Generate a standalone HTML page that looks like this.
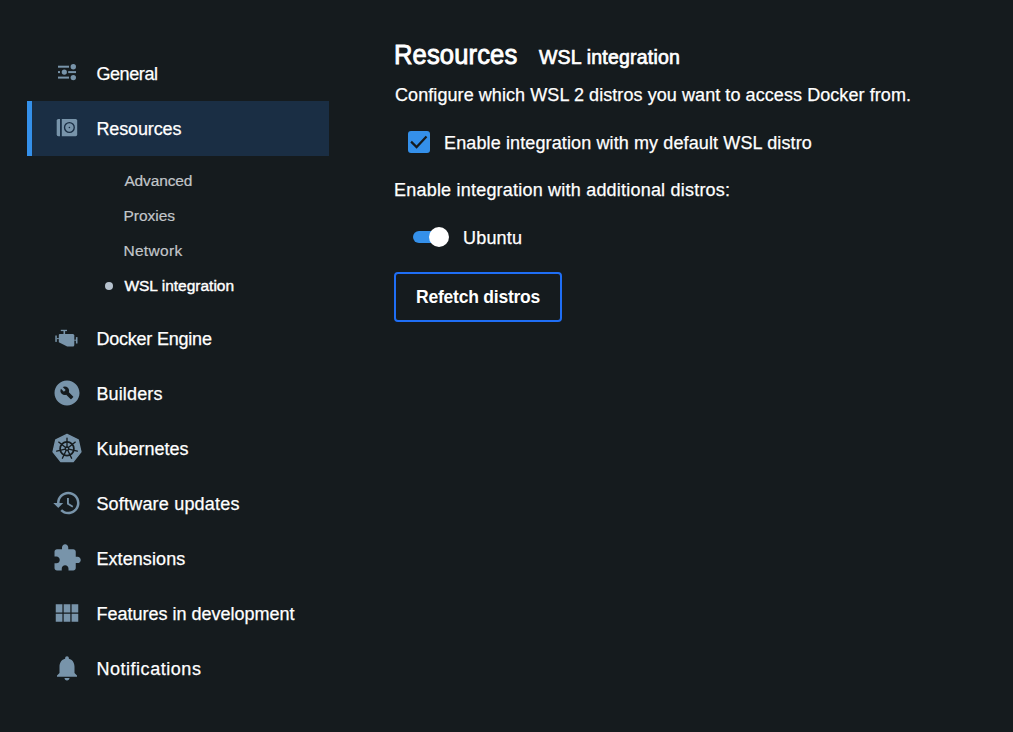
<!DOCTYPE html>
<html><head><meta charset="utf-8">
<style>
html,body{margin:0;padding:0;}
body{width:1013px;height:732px;overflow:hidden;background:#151b1e;font-family:"Liberation Sans",sans-serif;color:#fff;position:relative;}
.t{position:absolute;white-space:nowrap;line-height:1;}
.nav,.body{-webkit-text-stroke:0.25px #fff;}
.nav{font-size:18px;left:96.4px;}
.sub{font-size:15.5px;left:123.4px;color:#c2c6ca;-webkit-text-stroke:0.2px #c2c6ca;}
.ico{position:absolute;left:52px;width:30px;height:30px;}
.ico svg{display:block;width:30px;height:30px;}
.hl{position:absolute;left:27px;top:101px;width:302px;height:55px;background:#1a2e44;}
.bar{position:absolute;left:27px;top:101px;width:5px;height:55px;background:#3490ea;}
.dot{position:absolute;left:105px;top:282px;width:8px;height:8px;border-radius:50%;background:#b6c2ce;}
.body{font-size:18px;}
</style></head><body>
<div class="hl"></div><div class="bar"></div>

<!-- icons -->
<div class="ico" style="top:58px"><svg viewBox="0 0 30 30" fill="#7894aa">
<rect x="6" y="7.7" width="11" height="2"/><circle cx="21.3" cy="8.7" r="2.7"/>
<rect x="6" y="13.1" width="2" height="2"/><circle cx="12.3" cy="14.1" r="2.6"/><rect x="16.2" y="13.1" width="7.8" height="2"/>
<rect x="6" y="18.6" width="11" height="2"/><circle cx="21.3" cy="19.6" r="2.7"/>
</svg></div>
<div class="ico" style="top:113px"><svg viewBox="0 0 30 30">
<rect x="4.7" y="5.9" width="20.5" height="17.3" rx="1.6" fill="#7894aa"/>
<rect x="8" y="5" width="1.8" height="19" fill="#1a2e44"/>
<circle cx="17.4" cy="14.5" r="4.85" fill="none" stroke="#1a2e44" stroke-width="1.35"/>
<circle cx="17.4" cy="14.5" r="0.8" fill="#1a2e44"/>
</svg></div>
<div class="ico" style="top:323px"><svg viewBox="0 0 30 30" fill="#7894aa">
<rect x="8.8" y="6.8" width="6.2" height="1.3"/><rect x="11.5" y="8" width="1.6" height="3"/>
<path d="M6.8 11.9Q6.8 10.9 7.8 10.9H20.8Q22.3 10.9 22.3 12.4V21.9Q22.3 23.4 20.8 23.4H15.2L6.8 19.3Z"/>
<rect x="3.3" y="12.5" width="1.5" height="6.4"/><rect x="4.8" y="15.1" width="2.1" height="1"/>
<rect x="23.9" y="14.1" width="1.6" height="6.4"/><rect x="22.2" y="16.7" width="1.8" height="1"/>
</svg></div>
<div class="ico" style="top:378px"><svg viewBox="0 0 24 24" fill="#7894aa"><path fill-rule="evenodd" d="M12,2C6.48,2,2,6.48,2,12c0,5.52,4.48,10,10,10s10-4.48,10-10C22,6.48,17.52,2,12,2z M16.9,15.49l-1.4,1.4c-0.2,0.2-0.51,0.2-0.71,0l-3.41-3.41c-1.22,0.43-2.64,0.17-3.62-0.81c-1.11-1.11-1.3-2.79-0.59-4.1l2.35,2.35l1.41-1.41L8.58,7.17c1.32-0.71,2.99-0.52,4.1,0.59c0.98,0.98,1.24,2.4,0.81,3.62l3.41,3.41C17.09,14.98,17.09,15.3,16.9,15.49z"/></svg></div>
<div class="ico" style="top:433px"><svg viewBox="0 0 30 30"><polygon points="15.00,1.40 26.18,6.78 28.94,18.88 21.20,28.58 8.80,28.58 1.06,18.88 3.82,6.78" fill="#7894aa" stroke="#7894aa" stroke-width="1.4" stroke-linejoin="round"/><circle cx="15" cy="15.7" r="6.9" fill="none" stroke="#151b1e" stroke-width="1.7"/><line x1="15.00" y1="13.90" x2="15.00" y2="5.10" stroke="#151b1e" stroke-width="1.35" stroke-linecap="round"/><line x1="16.41" y1="14.58" x2="23.29" y2="9.09" stroke="#151b1e" stroke-width="1.35" stroke-linecap="round"/><line x1="16.75" y1="16.10" x2="25.33" y2="18.06" stroke="#151b1e" stroke-width="1.35" stroke-linecap="round"/><line x1="15.78" y1="17.32" x2="19.60" y2="25.25" stroke="#151b1e" stroke-width="1.35" stroke-linecap="round"/><line x1="14.22" y1="17.32" x2="10.40" y2="25.25" stroke="#151b1e" stroke-width="1.35" stroke-linecap="round"/><line x1="13.25" y1="16.10" x2="4.67" y2="18.06" stroke="#151b1e" stroke-width="1.35" stroke-linecap="round"/><line x1="13.59" y1="14.58" x2="6.71" y2="9.09" stroke="#151b1e" stroke-width="1.35" stroke-linecap="round"/><circle cx="15" cy="15.7" r="1.7" fill="none" stroke="#151b1e" stroke-width="1.3"/></svg></div>
<div class="ico" style="top:488px"><svg viewBox="0 0 24 24" fill="#7894aa"><path d="M13 3c-4.97 0-9 4.030-9 9H1l3.89 3.89.07.14L9 12H6c0-3.87 3.13-7 7-7s7 3.13 7 7-3.13 7-7 7c-1.93 0-3.68-.79-4.94-2.06l-1.42 1.42C8.270 19.99 10.51 21 13 21c4.97 0 9-4.03 9-9s-4.03-9-9-9zm-1 5v5l4.28 2.54.72-1.21-3.5-2.08V8H12z"/></svg></div>
<div class="ico" style="top:543px"><svg viewBox="0 0 24 24" fill="#7894aa"><path d="M20.5 11H19V7c0-1.1-.9-2-2-2h-4V3.5C13 2.12 11.88 1 10.5 1S8 2.12 8 3.5V5H4c-1.1 0-1.99.9-1.99 2v3.8H3.5c1.49 0 2.7 1.21 2.7 2.7s-1.21 2.7-2.7 2.7H2V20c0 1.1.9 2 2 2h3.8v-1.5c0-1.49 1.21-2.7 2.7-2.7 1.49 0 2.7 1.21 2.7 2.7V22H17c1.1 0 2-.9 2-2v-4h1.5c1.38 0 2.5-1.12 2.5-2.5S21.880 11 20.5 11z"/></svg></div>
<div class="ico" style="top:598px"><svg viewBox="0 0 24 24" fill="#7894aa"><path d="M14.67 5v6.5H9.33V5zm1 6.5H21V5h-5.33zm-1 7.5v-6.5H9.33V19zm1-6.5V19H21v-6.5zm-7.34 0H3V19h5.33zm0-1V5H3v6.5z"/></svg></div>
<div class="ico" style="top:653px"><svg viewBox="0 0 24 24" fill="#7894aa"><path d="M12 22c1.1 0 2-.9 2-2h-4c0 1.1.9 2 2 2zm6-6v-5c0-3.07-1.64-5.64-4.5-6.32V4c0-.83-.67-1.5-1.5-1.5s-1.5.67-1.5 1.5v.68C7.63 5.36 6 7.92 6 11v5l-2 2v1h16v-1l-2-2z"/></svg></div>

<!-- sidebar text -->
<div class="t nav" style="top:65px;letter-spacing:-0.4px">General</div>
<div class="t nav" style="letter-spacing:-0.125px;top:120px">Resources</div>
<div class="t sub" style="left:124.4px;letter-spacing:-0.143px;top:173px">Advanced</div>
<div class="t sub" style="letter-spacing:-0.001px;top:208px">Proxies</div>
<div class="t sub" style="letter-spacing:0.333px;top:243px">Network</div>
<div class="dot"></div>
<div class="t sub" style="left:124.4px;top:278px;font-size:15.5px;color:#fff;-webkit-text-stroke:0.4px #fff;letter-spacing:0.0px">WSL integration</div>
<div class="t nav" style="top:330px;letter-spacing:-0.213px">Docker Engine</div>
<div class="t nav" style="letter-spacing:0.143px;top:385px">Builders</div>
<div class="t nav" style="letter-spacing:0.0px;top:440px">Kubernetes</div>
<div class="t nav" style="top:495px;letter-spacing:0.194px">Software updates</div>
<div class="t nav" style="top:550px;letter-spacing:0.089px">Extensions</div>
<div class="t nav" style="top:605px;letter-spacing:-0.001px">Features in development</div>
<div class="t nav" style="top:660px;letter-spacing:0.537px">Notifications</div>

<!-- main -->
<div class="t" style="left:393.8px;top:41.5px;font-size:27px;-webkit-text-stroke:0.9px #fff;letter-spacing:0.125px;transform:scaleX(0.947);transform-origin:0 0">Resources</div>
<div class="t" style="left:539px;top:48px;font-size:19.5px;-webkit-text-stroke:0.7px #fff;letter-spacing:0.2px">WSL integration</div>
<div class="t body" style="left:395px;top:86px;letter-spacing:0.074px">Configure which WSL 2 distros you want to access Docker from.</div>
<div style="position:absolute;left:407.9px;top:130.7px;width:22.4px;height:22.4px;border-radius:3px;background:#3490ea"></div>
<svg style="position:absolute;left:400px;top:125px" width="40" height="40"><polyline points="11.1,16.6 16.6,22.1 26.5,11.5" fill="none" stroke="#151b1e" stroke-width="2.2"/></svg>
<div class="t body" style="left:444.0px;top:134px;letter-spacing:0.12px">Enable integration with my default WSL distro</div>
<div class="t body" style="left:394.0px;top:181px;letter-spacing:0.21px">Enable integration with additional distros:</div>
<div style="position:absolute;left:413px;top:231px;width:33px;height:12px;border-radius:6px;background:#3490ea"></div>
<div style="position:absolute;left:429px;top:227px;width:20px;height:20px;border-radius:50%;background:#fff"></div>
<div class="t body" style="left:463.0px;top:229px;letter-spacing:0.2px">Ubuntu</div>
<div style="position:absolute;left:394px;top:272px;width:164px;height:46px;border:2px solid #1f6ef5;border-radius:4px"></div>
<div class="t" style="left:416px;top:289px;font-size:17.5px;font-weight:bold;letter-spacing:-0.221px">Refetch distros</div>
</body></html>
